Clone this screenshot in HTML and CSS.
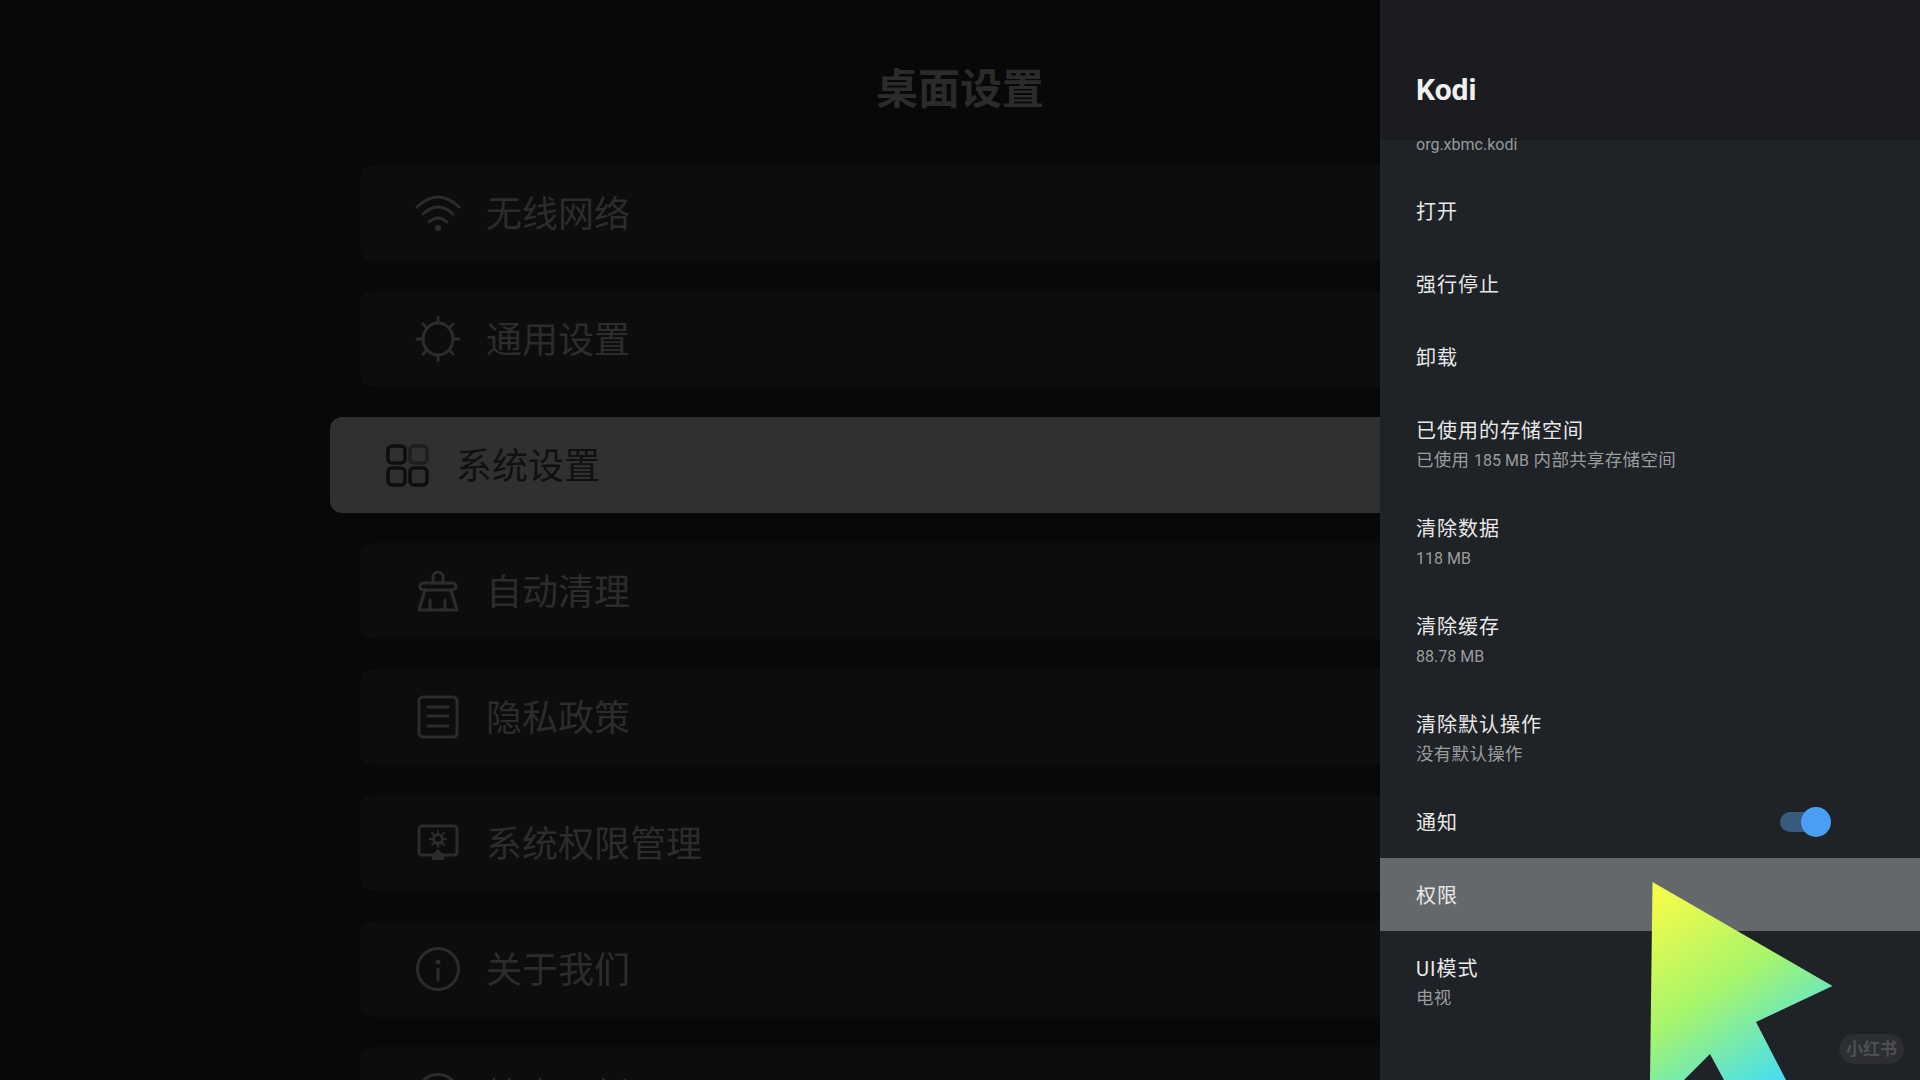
FILE: index.html
```html
<!DOCTYPE html>
<html lang="zh-CN">
  <head>
    <meta charset="UTF-8" />
    <title>桌面设置</title>
    <link rel="stylesheet" href="styles.css">
  </head>
  <body>
    <main class="settings">
      <h1 class="settings-title">桌面设置</h1>
      <div class="menu">
        <div class="menu-row">
          <svg class="menu-icon" viewBox="0 0 46 46">
            <path d="M2 17Q23 -3 44 17" />
            <path d="M8 24Q23 10 38 24" />
            <path d="M14 32Q23 24 32 32" />
            <circle class="solid" cx="23" cy="38" r="3" />
          </svg>
          <span class="menu-label">无线网络</span>
        </div>
        <div class="menu-row">
          <svg class="menu-icon" viewBox="0 0 46 46">
            <ellipse cx="23" cy="23" rx="15" ry="16" />
            <path d="M23 1V6M23 40V45M2 23H7M39 23H44M8 8L12 12M38 8L34 12M8 38L12 34M38 38L34 34" />
          </svg>
          <span class="menu-label">通用设置</span>
        </div>
        <div class="menu-row selected">
          <svg class="menu-icon" viewBox="0 0 46 46">
            <rect x="3" y="4" width="17" height="17" rx="4" />
            <rect class="faint" x="25" y="4" width="17" height="17" rx="4" />
            <rect x="3" y="26" width="17" height="17" rx="4" />
            <rect x="25" y="26" width="17" height="17" rx="4" />
          </svg>
          <span class="menu-label">系统设置</span>
        </div>
        <div class="menu-row">
          <svg class="menu-icon" viewBox="0 0 46 46">
            <path d="M18 15V9A5 5 0 0 1 28 9V15" />
            <rect x="5" y="15" width="36" height="7" rx="3.5" />
            <path d="M10 22L4 42H42L36 22M15 32V42M30 32V42" />
          </svg>
          <span class="menu-label">自动清理</span>
        </div>
        <div class="menu-row">
          <svg class="menu-icon" viewBox="0 0 46 46">
            <rect x="4" y="3" width="38" height="40" rx="4" />
            <path d="M13 13H33M13 22H33M13 32H33" />
          </svg>
          <span class="menu-label">隐私政策</span>
        </div>
        <div class="menu-row">
          <svg class="menu-icon" viewBox="0 0 46 46">
            <rect x="4" y="6" width="38" height="29" rx="3" />
            <circle cx="23" cy="19" r="4.5" />
            <path class="thin" d="M23 11V13M23 25V27M15 19H17M29 19H31M17 13L18.5 14.5M29 13L27.500 14.500M17 25L18.500 23.500M29 25L27.500 23.500" />
            <path class="solid" d="M17 40V35L23 29L29 35V40Z" />
          </svg>
          <span class="menu-label">系统权限管理</span>
        </div>
        <div class="menu-row">
          <svg class="menu-icon" viewBox="0 0 46 46">
            <circle cx="23" cy="23" r="20.5" />
            <circle class="solid" cx="23" cy="16" r="2.500" />
            <path d="M23 23V34" />
          </svg>
          <span class="menu-label">关于我们</span>
        </div>
        <div class="menu-row">
          <svg class="menu-icon" viewBox="0 0 46 46">
            <circle cx="23" cy="23" r="20.5" />
          </svg>
          <span class="menu-label">检查更新</span>
        </div>
      </div>
    </main>

    <aside class="panel">
      <header class="panel-header">Kodi</header>
      <div class="panel-list">
        <div class="package">org.xbmc.kodi</div>
        <div class="option">打开</div>
        <div class="option">强行停止</div>
        <div class="option">卸载</div>
        <div class="option double">
          <div>已使用的存储空间</div>
          <div class="hint">已使用 <span class="latin">185 MB</span> 内部共享存储空间</div>
        </div>
        <div class="option double">
          <div>清除数据</div>
          <div class="hint"><span class="latin">118 MB</span></div>
        </div>
        <div class="option double">
          <div>清除缓存</div>
          <div class="hint"><span class="latin">88.78 MB</span></div>
        </div>
        <div class="option double">
          <div>清除默认操作</div>
          <div class="hint">没有默认操作</div>
        </div>
        <div class="option">
          <span>通知</span>
          <span class="toggle"><span class="toggle-knob"></span></span>
        </div>
        <div class="option focused">权限</div>
        <div class="option double">
          <div>UI模式</div>
          <div class="hint">电视</div>
        </div>
      </div>
    </aside>

    <svg class="cursor" viewBox="0 0 200 210">
      <defs>
        <linearGradient id="cursor-fill" gradientUnits="userSpaceOnUse" x1="25" y1="30" x2="140" y2="205">
          <stop offset="0" stop-color="#f0fb4b" />
          <stop offset="0.5" stop-color="#a6f56c" />
          <stop offset="1" stop-color="#4adfec" />
        </linearGradient>
      </defs>
      <polygon fill="url(#cursor-fill)" points="12.5,12 192.5,116 116,152 146,210 84,210 70,184 44,210 10,210" />
    </svg>

    <div class="watermark">小红书</div>
  </body>
</html>
```

FILE: styles.css
```css
body {
  margin: 0;
  width: 1920px;
  height: 1080px;
  overflow: hidden;
  background-color: #080808;
  font-family: Roboto, "Noto Sans CJK SC", sans-serif;
}
.settings {
  padding: 0 360px;
}
.settings-title {
  margin: 0;
  padding: 60px 0 45px;
  font-size: 42px;
  font-weight: bold;
  line-height: 60px;
  text-align: center;
  color: #2b2b2b;
}
.menu {
  display: flex;
  flex-direction: column;
  gap: 30px;
}
.menu-row {
  display: flex;
  align-items: center;
  gap: 25px;
  flex: none;
  height: 96px;
  padding-left: 55px;
  border-radius: 12px;
  background-color: #0d0d0d;
  font-size: 36px;
  color: #2c2c2c;
}
.menu-row.selected {
  margin: 0 -30px;
  background-color: #303030;
  color: #101010;
}
.menu-label {
  margin-bottom: 4px;
}
.menu-icon {
  flex: none;
  width: 46px;
  height: 46px;
  fill: none;
  stroke: #2c2c2c;
  stroke-width: 3;
  stroke-linecap: round;
  stroke-linejoin: round;
}
.menu-icon .solid {
  fill: #2c2c2c;
  stroke: none;
}
.menu-icon .thin {
  stroke-width: 2;
}
.selected .menu-icon {
  stroke: #0e0e0e;
  stroke-width: 3.5;
}
.selected .menu-icon .faint {
  stroke: #1e1e1e;
}
.panel {
  position: fixed;
  top: 0;
  right: 0;
  display: flex;
  flex-direction: column;
  width: 540px;
  height: 1080px;
  overflow: hidden;
  background-color: #1f2226;
  color: #e8e8e8;
}
.panel-header {
  flex: none;
  height: 140px;
  padding-left: 36px;
  background-color: #1a1c1f;
  font-size: 30px;
  font-weight: bold;
  line-height: 180px;
  color: #f0f0f0;
}
.package {
  margin: -5px 0 19px;
  padding-left: 36px;
  font-size: 16px;
  line-height: 20px;
  color: #96999b;
}
.option {
  display: flex;
  align-items: center;
  height: 73px;
  padding: 0 89px 0 36px;
  font-size: 20px;
  letter-spacing: 1px;
}
.option.double {
  flex-direction: column;
  align-items: flex-start;
  justify-content: center;
  box-sizing: border-box;
  height: 98px;
  padding-top: 4px;
}
.option.focused {
  background-color: #65686a;
}
.hint {
  margin-top: 3px;
  font-size: 17.5px;
  letter-spacing: 0.3px;
  line-height: 26px;
  color: #9a9c9e;
}
.latin {
  font-size: 16px;
  letter-spacing: 0;
}
.toggle {
  position: relative;
  width: 46px;
  height: 20px;
  margin-left: auto;
  margin-right: 5px;
  border-radius: 10px;
  background-color: #375a7f;
}
.toggle-knob {
  position: absolute;
  top: -5px;
  right: -5px;
  width: 30px;
  height: 30px;
  border-radius: 50%;
  background-color: #4a9ff5;
}
.cursor {
  position: fixed;
  left: 1640px;
  top: 870px;
  width: 200px;
  height: 210px;
}
.watermark {
  position: fixed;
  left: 1839px;
  top: 1034px;
  width: 65px;
  height: 30px;
  border-radius: 15px;
  background-color: #2c2e31;
  font-size: 17px;
  font-weight: bold;
  line-height: 31px;
  text-align: center;
  color: #4d4f52;
}
```
